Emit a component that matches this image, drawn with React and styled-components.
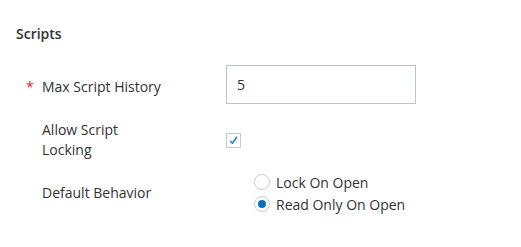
import React, { useState } from "react";
import styled, { createGlobalStyle } from "styled-components";

const GlobalStyle = createGlobalStyle`
  html, body {
    margin: 0;
    padding: 0;
    background: #ffffff;
  }
  body {
    font-family: "Open Sans", "Liberation Sans", sans-serif;
    color: #333333;
  }
`;

const Page = styled.div`
  width: 521px;
  height: 247px;
  box-sizing: border-box;
  padding: 24px 0 0 16px;
`;

const SectionTitle = styled.h3`
  margin: 0;
  font-size: 14px;
  font-weight: 600;
  line-height: 20px;
  color: #333333;
`;

const Form = styled.div`
  display: flex;
  flex-direction: column;
  padding: 21px 0 0 10px;
`;

const Row = styled.div`
  display: flex;
  align-items: ${(p) => p.$align || "center"};
  margin-top: ${(p) => p.$gap || 0}px;
`;

const LabelCell = styled.div`
  display: flex;
  width: 200px;
  flex: none;
  padding-top: ${(p) => p.$offset || 0}px;
  box-sizing: border-box;
`;

const Required = styled.span`
  width: 16px;
  flex: none;
  color: #e0262b;
  font-size: 14px;
  line-height: 20px;
`;

const LabelText = styled.span`
  max-width: 124px;
  font-size: 14px;
  line-height: 20px;
  color: #333333;
`;

const TextInput = styled.input`
  width: 190px;
  height: 39px;
  box-sizing: border-box;
  border: 1px solid #b9c6cd;
  border-radius: 0;
  padding: 0 10px;
  font-family: "Open Sans", "Liberation Sans", sans-serif;
  font-size: 14px;
  color: #333333;
  outline: none;
`;

const CheckBox = styled.span`
  display: flex;
  align-items: center;
  justify-content: center;
  width: 15px;
  height: 15px;
  box-sizing: border-box;
  border: 1px solid #c2ccd3;
  background: #ffffff;
  cursor: pointer;
`;

const RadioGroup = styled.div`
  display: flex;
  flex-direction: column;
  padding-left: 28px;
`;

const RadioOption = styled.label`
  display: flex;
  align-items: center;
  height: 22px;
  gap: 6px;
  font-size: 14px;
  color: #333333;
  cursor: pointer;
`;

const RadioCircle = styled.span`
  display: flex;
  align-items: center;
  justify-content: center;
  width: 16px;
  height: 16px;
  box-sizing: border-box;
  border: 1px solid #c5cfd6;
  border-radius: 50%;
  background: #ffffff;

  &::after {
    content: "";
    width: 8px;
    height: 8px;
    border-radius: 50%;
    background: ${(p) => (p.$checked ? "#0a72bd" : "transparent")};
  }
`;

const CheckMark = () => (
  <svg width="9" height="9" viewBox="0 0 9 9">
    <path
      d="M1.5 5.2 L3.4 7.2 L7.6 1.2"
      fill="none"
      stroke="#1b7fd1"
      strokeWidth="1.5"
      strokeLinecap="round"
      strokeLinejoin="round"
    />
  </svg>
);

const behaviors = ["Lock On Open", "Read Only On Open"];

const App = () => {
  const [history, setHistory] = useState("5");
  const [locking, setLocking] = useState(true);
  const [behavior, setBehavior] = useState("Read Only On Open");

  return (
    <Page>
      <GlobalStyle />
      <SectionTitle>Scripts</SectionTitle>
      <Form>
        <Row $align="flex-start">
          <LabelCell $offset={12}>
            <Required>*</Required>
            <LabelText>Max Script History</LabelText>
          </LabelCell>
          <TextInput
            value={history}
            onChange={(e) => setHistory(e.target.value)}
          />
        </Row>
        <Row $gap={16}>
          <LabelCell>
            <Required />
            <LabelText>Allow Script Locking</LabelText>
          </LabelCell>
          <CheckBox onClick={() => setLocking(!locking)}>
            {locking && <CheckMark />}
          </CheckBox>
        </Row>
        <Row $gap={11}>
          <LabelCell>
            <Required />
            <LabelText>Default Behavior</LabelText>
          </LabelCell>
          <RadioGroup>
            {behaviors.map((b) => (
              <RadioOption key={b} onClick={() => setBehavior(b)}>
                <RadioCircle $checked={behavior === b} />
                {b}
              </RadioOption>
            ))}
          </RadioGroup>
        </Row>
      </Form>
    </Page>
  );
};

export default App;
